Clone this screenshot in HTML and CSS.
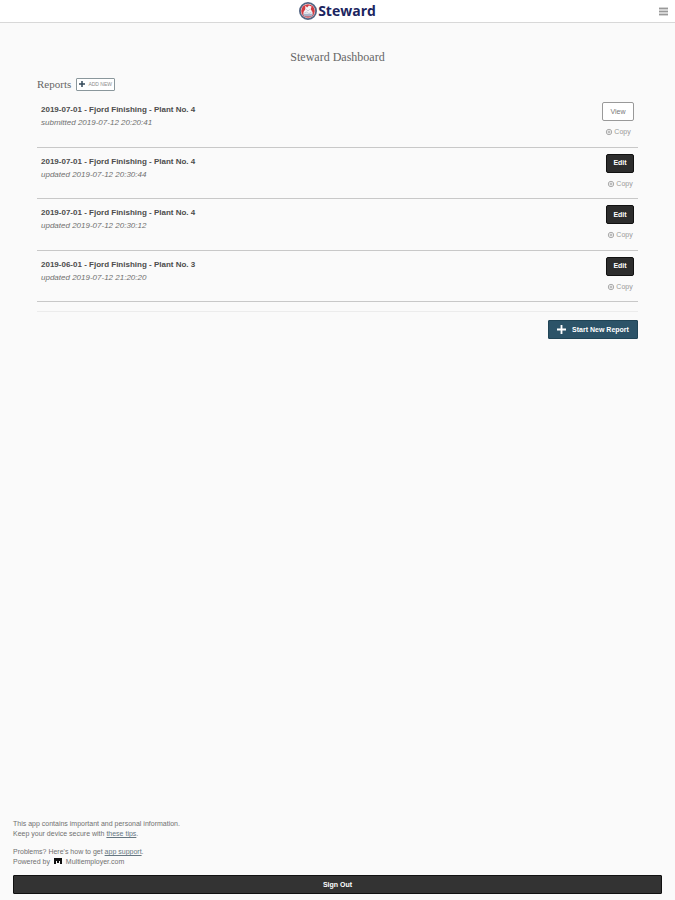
FILE: index.html
```html
<!DOCTYPE html>
<html lang="en">
<head>
<meta charset="utf-8">
<title>Steward Dashboard</title>
<link rel="stylesheet" href="styles.css">
</head>
<body>
<header class="topbar">
  <a class="brand" href="#">
    <svg class="brand-mark" viewBox="0 0 20 20" aria-hidden="true">
      <circle cx="10" cy="10" r="9" fill="#fff" stroke="#536583" stroke-width="2"/>
      <circle cx="10" cy="10" r="7.6" fill="#d23a40"/>
      <path d="M7 4l2 2 2-2 3 1-1 3 2 3v3H5v-3l2-3z" fill="#f5f3f6"/>
      <path d="M4 13h12l-2 3H6z" fill="#a9b2c8"/>
      <path d="M8 8l2 2 2-2M6 12l3-1 2 2 3-2" fill="none" stroke="#c3c5d2"/>
    </svg>
    <span>Steward</span>
  </a>
  <button class="menu" type="button" aria-label="Menu">
    <svg viewBox="0 0 9 9" aria-hidden="true"><path fill="#d4d4d4" d="M0 0h9v9H0z"/><path d="M0 1.5h9M0 4.5h9M0 7.5h9" stroke="#999"/></svg>
  </button>
</header>
<main class="content">
  <h1>Steward Dashboard</h1>
  <div class="section-head">
    <h2>Reports</h2>
    <button class="add" type="button">
      <svg viewBox="0 0 6 6" aria-hidden="true"><path d="M3 0v6M0 3h6" stroke="#34495a" stroke-width="1.5"/></svg>
      ADD NEW
    </button>
  </div>
  <ul class="reports">
    <li class="report">
      <div class="info"><h3>2019-07-01 - Fjord Finishing - Plant No. 4</h3><p>submitted 2019-07-12 20:20:41</p></div>
      <div class="actions">
        <button class="btn view" type="button">View</button>
        <button class="copy" type="button"><svg viewBox="0 0 8 8" aria-hidden="true"><circle cx="4" cy="4" r="2.7"/><path d="M4 2.5v3M2.5 4h3"/></svg>Copy</button>
      </div>
    </li>
    <li class="report">
      <div class="info"><h3>2019-07-01 - Fjord Finishing - Plant No. 4</h3><p>updated 2019-07-12 20:30:44</p></div>
      <div class="actions">
        <button class="btn edit" type="button">Edit</button>
        <button class="copy" type="button"><svg viewBox="0 0 8 8" aria-hidden="true"><circle cx="4" cy="4" r="2.7"/><path d="M4 2.5v3M2.5 4h3"/></svg>Copy</button>
      </div>
    </li>
    <li class="report">
      <div class="info"><h3>2019-07-01 - Fjord Finishing - Plant No. 4</h3><p>updated 2019-07-12 20:30:12</p></div>
      <div class="actions">
        <button class="btn edit" type="button">Edit</button>
        <button class="copy" type="button"><svg viewBox="0 0 8 8" aria-hidden="true"><circle cx="4" cy="4" r="2.7"/><path d="M4 2.5v3M2.5 4h3"/></svg>Copy</button>
      </div>
    </li>
    <li class="report">
      <div class="info"><h3>2019-06-01 - Fjord Finishing - Plant No. 3</h3><p>updated 2019-07-12 21:20:20</p></div>
      <div class="actions">
        <button class="btn edit" type="button">Edit</button>
        <button class="copy" type="button"><svg viewBox="0 0 8 8" aria-hidden="true"><circle cx="4" cy="4" r="2.7"/><path d="M4 2.5v3M2.5 4h3"/></svg>Copy</button>
      </div>
    </li>
  </ul>
  <div class="new-row">
    <button class="start" type="button">
      <svg viewBox="0 0 10 10" aria-hidden="true"><path d="M5 0v10M0 5h10" stroke="#fff" stroke-width="2"/></svg>
      Start New Report
    </button>
  </div>
</main>
<footer class="footer">
  <p>This app contains important and personal information.<br>Keep your device secure with <a href="#">these tips</a>.</p>
  <p>Problems? Here's how to get <a href="#">app support</a>.<br>Powered by <svg class="me" viewBox="0 0 8 6" aria-hidden="true"><path fill="#111" d="M0 0h8v6H6V3H5v2H3V3H2v3H0z"/></svg> Multiemployer.com</p>
  <button class="signout" type="button">Sign Out</button>
</footer>
</body>
</html>
```
FILE: styles.css
```css
* { box-sizing: border-box; }

body {
  margin: 0;
  min-height: 100vh;
  display: flex;
  flex-direction: column;
  background: #fafafa;
  color: #707070;
  font: 7px/10px "Liberation Sans", Arial, sans-serif;
}

h1, h2, h3, p, ul { margin: 0; padding: 0; }
h1, h2 { color: #666; font-family: "Liberation Serif", "Times New Roman", serif; font-weight: 400; }
svg { display: block; flex: none; }

button {
  display: flex;
  align-items: center;
  justify-content: center;
  margin: 0;
  padding: 0;
  border: 0;
  background: none;
  color: inherit;
  font: inherit;
  cursor: pointer;
}

.topbar {
  display: grid;
  grid-template-columns: 1fr auto 1fr;
  align-items: center;
  height: 23px;
  padding: 0 7px;
  background: #fff;
  border-bottom: 1px solid #d8d8d8;
}
.brand {
  grid-column: 2;
  display: flex;
  align-items: center;
  gap: 1px;
  color: #1b2560;
  font: 700 14px/20px "Open Sans", sans-serif;
  text-decoration: none;
}
.brand-mark { width: 18px; height: 18px; }
.menu { justify-self: end; }
.menu svg { width: 9px; height: 9px; }

.content { padding: 26px 37px 0; }
h1 { text-align: center; font-size: 12px; line-height: 16px; }

.section-head { display: flex; align-items: center; gap: 5px; margin-top: 12px; }
h2 { font-size: 11px; line-height: 14px; }
.add {
  gap: 3px;
  width: 39px;
  height: 13px;
  border: 1px solid #8a979c;
  border-radius: 1px;
  background: #fff;
  color: #8c8c8c;
  font-size: 5px;
  line-height: 8px;
}
.add svg { width: 6px; height: 6px; }

.reports {
  display: grid;
  grid-auto-rows: 1fr;
  min-height: 216px;
  margin-top: 5px;
  padding-bottom: 9px;
  border-bottom: 1px solid #ececec;
  list-style: none;
}
.report {
  display: flex;
  justify-content: space-between;
  padding: 6px 4px 0;
  border-bottom: 1px solid #c8c8c8;
}
.info { padding-top: 1px; }
h3 { color: #4c4c4c; font-size: 8px; line-height: 13px; }
.info p { font-size: 8px; line-height: 13px; font-style: italic; }
.actions { display: flex; flex-direction: column; align-items: center; gap: 6px; }
.btn { height: 19px; border-radius: 2px; }
.view { width: 32px; border: 1px solid #999; background: #fff; color: #777; }
.edit { width: 28px; border: 1px solid #111; background: #2d2d2d; color: #fff; font-weight: 700; }
.copy { gap: 1px; color: #999; }
.copy svg { width: 8px; height: 8px; fill: none; stroke: #aaa; }

.new-row { display: flex; justify-content: flex-end; margin-top: 8px; }
.start {
  gap: 6px;
  width: 90px;
  height: 19px;
  border: 1px solid #204456;
  border-radius: 1px;
  background: #2c5368;
  color: #fff;
  font-weight: 700;
}
.start svg { width: 9px; height: 9px; }

.footer { margin-top: auto; padding: 0 13px 6px; }
.footer p { margin-bottom: 8px; }
.footer a { color: #667782; }
.me { display: inline-block; width: 8px; height: 6px; margin: 0 2px; }
.signout {
  width: 100%;
  height: 19px;
  border: 1px solid #111;
  border-radius: 1px;
  background: #333;
  color: #fff;
  font-weight: 700;
}
```
